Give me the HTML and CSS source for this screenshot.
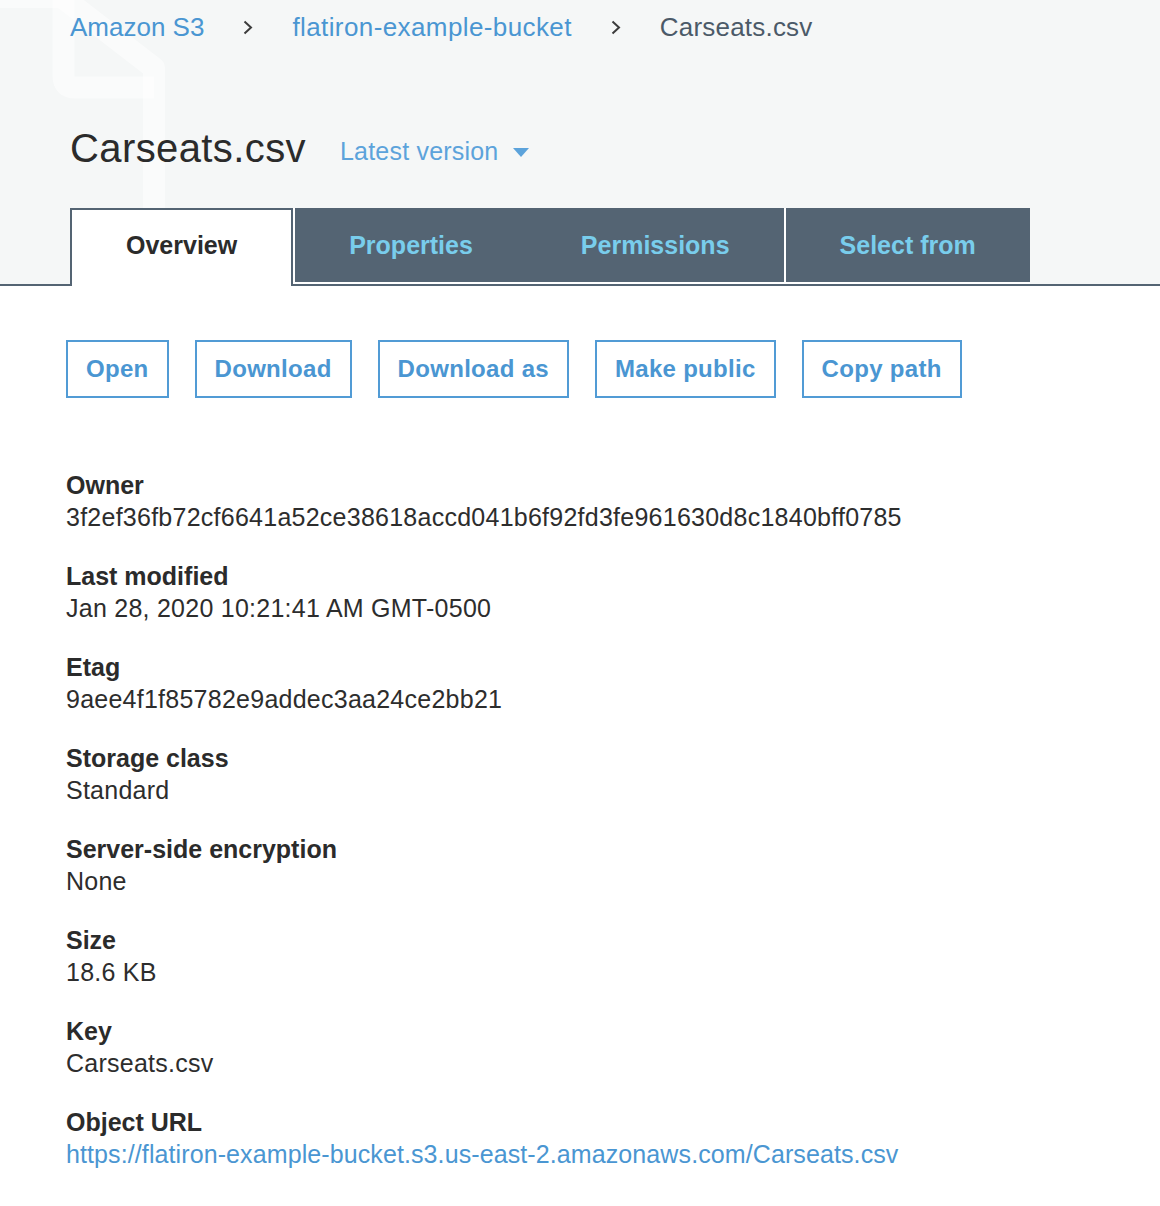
FILE: index.html
```html
<!DOCTYPE html>
<html lang="en">
<head>
<meta charset="utf-8">
<title>Carseats.csv - S3</title>
<link rel="stylesheet" href="styles.css">
</head>
<body>
<header class="header">
  <svg class="watermark" width="220" height="286" viewBox="0 0 220 286" aria-hidden="true">
    <path d="M-40 -3 H62 L154 68 V300" />
    <path d="M63.5 -3 V76 Q63.5 87.5 75 87.5 H154" />
  </svg>
  <nav class="crumbs">
    <a class="crumb-link" href="#">Amazon S3</a>
    <svg class="chev" width="10" height="15" viewBox="0 0 10 15"><polyline points="1.5,1.5 8,7.5 1.5,13.5" /></svg>
    <a class="crumb-link crumb-bucket" href="#">flatiron-example-bucket</a>
    <svg class="chev" width="10" height="15" viewBox="0 0 10 15"><polyline points="1.5,1.5 8,7.5 1.5,13.5" /></svg>
    <span class="crumb-current">Carseats.csv</span>
  </nav>
  <div class="title-row">
    <h1 class="title">Carseats.csv</h1>
    <span class="version">Latest version
      <svg class="caret" width="16" height="9" viewBox="0 0 16 9"><polygon points="0,0 16,0 8,9" /></svg>
    </span>
  </div>
  <div class="tabs">
    <div class="tab tab-active">Overview</div>
    <div class="tab tab-props">Properties</div>
    <div class="tab tab-perms">Permissions</div>
    <div class="tab tab-select">Select from</div>
  </div>
</header>
<main class="content">
  <div class="actions">
    <button class="btn">Open</button>
    <button class="btn">Download</button>
    <button class="btn">Download as</button>
    <button class="btn">Make public</button>
    <button class="btn">Copy path</button>
  </div>
  <dl class="details">
    <div class="item"><dt>Owner</dt><dd>3f2ef36fb72cf6641a52ce38618accd041b6f92fd3fe961630d8c1840bff0785</dd></div>
    <div class="item"><dt>Last modified</dt><dd>Jan 28, 2020 10:21:41 AM GMT-0500</dd></div>
    <div class="item"><dt>Etag</dt><dd>9aee4f1f85782e9addec3aa24ce2bb21</dd></div>
    <div class="item"><dt>Storage class</dt><dd>Standard</dd></div>
    <div class="item"><dt>Server-side encryption</dt><dd>None</dd></div>
    <div class="item"><dt>Size</dt><dd>18.6 KB</dd></div>
    <div class="item"><dt>Key</dt><dd>Carseats.csv</dd></div>
    <div class="item"><dt>Object URL</dt><dd><a class="url" href="#">https://flatiron-example-bucket.s3.us-east-2.amazonaws.com/Carseats.csv</a></dd></div>
  </dl>
</main>
</body>
</html>
```

FILE: styles.css
```css
* { box-sizing: border-box; }

html, body {
  margin: 0;
  padding: 0;
  background: #ffffff;
  font-family: "Liberation Sans", Arial, Helvetica, sans-serif;
  color: #2d2d2d;
}

.header {
  position: relative;
  z-index: 0;
  background: #f5f7f7;
  padding: 11px 0 0 70px;
  border-bottom: 2px solid #546473;
}

.watermark {
  position: absolute;
  left: 0;
  top: 0;
  z-index: -1;
  pointer-events: none;
}

.watermark path {
  fill: none;
  stroke: #ffffff;
  stroke-opacity: 0.5;
  stroke-width: 22;
  stroke-linejoin: round;
}

.crumbs {
  display: flex;
  align-items: center;
  height: 32px;
  font-size: 26px;
  line-height: 32px;
}

.crumb-link {
  color: #4a96d2;
  text-decoration: none;
}

.crumb-bucket {
  letter-spacing: 0.4px;
}

.crumb-current {
  color: #4b5a68;
  letter-spacing: 0.2px;
}

.chev {
  margin: 0 39px;
  flex: none;
}

.chev polyline {
  fill: none;
  stroke: #3c3c3c;
  stroke-width: 2;
}

.title-row {
  display: flex;
  align-items: flex-end;
  margin-top: 81px;
}

.title {
  margin: 0;
  font-size: 40px;
  line-height: 48px;
  font-weight: normal;
  color: #2b2b2b;
  letter-spacing: 0.4px;
}

.version {
  display: inline-flex;
  align-items: center;
  margin-left: 34px;
  margin-bottom: 5px;
  font-size: 25px;
  line-height: 32px;
  color: #5ca3db;
  letter-spacing: 0.2px;
}

.caret {
  margin-left: 15px;
  margin-top: 3px;
}

.caret polygon {
  fill: #5ca3db;
}

.tabs {
  display: flex;
  align-items: flex-start;
  margin-top: 36px;
}

.tab {
  font-size: 25px;
  font-weight: bold;
  line-height: 30px;
  padding: 22px 54px 22px;
  background: #546473;
  color: #79cdec;
  border-bottom: 2px solid #ffffff;
  white-space: nowrap;
}

.tab-active {
  background: #ffffff;
  color: #2b2b2b;
  border: 2px solid #546473;
  border-bottom: none;
  padding: 20px 54px 26px;
  margin-bottom: -2px;
}

.tab-props {
  border-left: 2px solid #ffffff;
}

.tab-perms {
  border-right: 2px solid #ffffff;
}

.content {
  padding: 54px 0 40px 66px;
}

.actions {
  display: flex;
  gap: 26px;
}

.btn {
  font-family: inherit;
  font-size: 24px;
  font-weight: bold;
  line-height: 30px;
  letter-spacing: 0.3px;
  padding: 12px 18px;
  background: #ffffff;
  color: #4a96d2;
  border: 2px solid #519bd5;
  border-radius: 0;
  margin: 0;
}

.details {
  margin: 71px 0 0;
}

.item {
  margin-bottom: 27px;
}

.item dt {
  font-size: 25px;
  line-height: 32px;
  font-weight: bold;
  color: #2b2b2b;
}

.item dd {
  margin: 0;
  font-size: 25px;
  line-height: 32px;
  color: #2d2d2d;
  letter-spacing: 0.25px;
}

.url {
  color: #4a96d2;
  text-decoration: none;
  letter-spacing: 0.1px;
}
```
